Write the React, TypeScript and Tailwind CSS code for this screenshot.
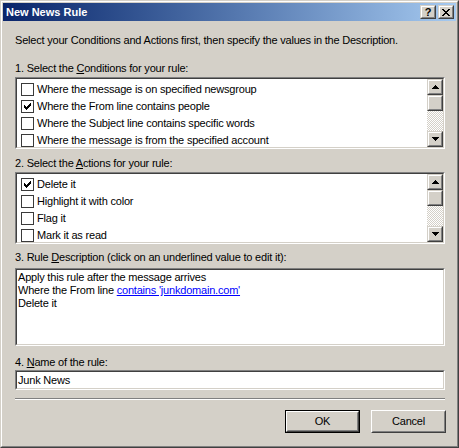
import type { ReactNode } from "react";

type BoxProps = { className?: string; innerClassName?: string; children?: ReactNode };

function Sunken({ className = "", innerClassName = "", children }: BoxProps) {
  return (
    <div className={`border border-t-[#808080] border-l-[#808080] border-r-white border-b-white ${className}`}>
      <div
        className={`h-full border border-t-[#404040] border-l-[#404040] border-r-[#d4d0c8] border-b-[#d4d0c8] bg-white ${innerClassName}`}
      >
        {children}
      </div>
    </div>
  );
}

function Raised({ className = "", children }: BoxProps) {
  return (
    <div className={`border border-t-[#d4d0c8] border-l-[#d4d0c8] border-r-[#404040] border-b-[#404040] ${className}`}>
      <div className="flex h-full items-center justify-center border border-t-white border-l-white border-r-[#808080] border-b-[#808080] bg-[#d4d0c8]">
        {children}
      </div>
    </div>
  );
}

function PushButton({ label, isDefault = false }: { label: string; isDefault?: boolean }) {
  const body = (
    <div className="h-full border border-t-white border-l-white border-r-[#404040] border-b-[#404040]">
      <div className="flex h-full items-center justify-center border border-t-[#d4d0c8] border-l-[#d4d0c8] border-r-[#808080] border-b-[#808080] bg-[#d4d0c8] text-[11px] text-black">
        {label}
      </div>
    </div>
  );
  if (isDefault) {
    return <div className="h-[23px] w-[75px] border border-black">{body}</div>;
  }
  return <div className="h-[23px] w-[75px]">{body}</div>;
}

function Arrow({ down = false }: { down?: boolean }) {
  return (
    <svg width="7" height="4" viewBox="0 0 7 4" shapeRendering="crispEdges" className={down ? "rotate-180" : ""}>
      <path d="M3 0h1v1h-1z M2 1h3v1h-3z M1 2h5v1h-5z M0 3h7v1h-7z" fill="#000" />
    </svg>
  );
}

function Scrollbar() {
  return (
    <div className="flex h-full w-[16px] shrink-0 flex-col">
      <Raised className="h-[16px]">
        <Arrow />
      </Raised>
      <Raised className="h-[16px]" />
      <div className="flex-1 bg-[image:repeating-conic-gradient(#d4d0c8_0_25%,#ffffff_0_50%)] bg-[length:2px_2px]" />
      <Raised className="h-[16px]">
        <Arrow down />
      </Raised>
    </div>
  );
}

function CheckRow({ label, checked = false }: { label: string; checked?: boolean }) {
  return (
    <div className="flex h-[17px] shrink-0 items-center pl-[4px]">
      <div className="flex h-[13px] w-[13px] shrink-0 items-center justify-center border border-[#3a3a3a] bg-white">
        {checked && (
          <svg width="11" height="11" viewBox="0 0 11 11" shapeRendering="crispEdges">
            <path d="M8 2h1v3h-1z M7 3h1v3h-1z M6 4h1v3h-1z M5 5h1v3h-1z M4 6h1v3h-1z M3 5h1v3h-1z M2 4h1v3h-1z" fill="#000" />
          </svg>
        )}
      </div>
      <span className="ml-[3px] whitespace-nowrap">{label}</span>
    </div>
  );
}

function RuleList({ items }: { items: { label: string; checked?: boolean }[] }) {
  return (
    <Sunken className="h-[72px] w-[430px]" innerClassName="flex">
      <div className="flex flex-1 flex-col overflow-hidden pt-[2px]">
        {items.map((item) => (
          <CheckRow key={item.label} label={item.label} checked={item.checked} />
        ))}
      </div>
      <Scrollbar />
    </Sunken>
  );
}

const conditions = [
  { label: "Where the message is on specified newsgroup" },
  { label: "Where the From line contains people", checked: true },
  { label: "Where the Subject line contains specific words" },
  { label: "Where the message is from the specified account" },
];

const actions = [
  { label: "Delete it", checked: true },
  { label: "Highlight it with color" },
  { label: "Flag it" },
  { label: "Mark it as read" },
];

export default function App() {
  return (
    <div className="h-[448px] w-[459px] border border-t-[#d4d0c8] border-l-[#d4d0c8] border-r-[#404040] border-b-[#404040] font-['Liberation_Sans',Arial,sans-serif] text-[11px] leading-[13px] tracking-[-0.2px] text-black">
      <div className="h-full border border-t-white border-l-white border-r-[#808080] border-b-[#808080] bg-[#d4d0c8] p-[1px]">
        {/* title bar */}
        <div className="flex h-[18px] items-center bg-linear-to-r from-[#0a246a] to-[#a6caf0] pl-[3px] pr-[2px]">
          <span className="flex-1 text-[11px] font-bold tracking-normal text-white">New News Rule</span>
          <Raised className="h-[14px] w-[16px]">
            <span className="text-[11px] font-bold leading-none tracking-normal">?</span>
          </Raised>
          <Raised className="ml-[2px] h-[14px] w-[16px]">
            <svg width="8" height="7" viewBox="0 0 8 7" shapeRendering="crispEdges">
              <path
                d="M0 0h2v1h-2z M6 0h2v1h-2z M1 1h2v1h-2z M5 1h2v1h-2z M2 2h4v1h-4z M3 3h2v1h-2z M2 4h4v1h-4z M1 5h2v1h-2z M5 5h2v1h-2z M0 6h2v1h-2z M6 6h2v1h-2z"
                fill="#000"
              />
            </svg>
          </Raised>
        </div>

        <div className="flex flex-col pl-[12px]">
          <p className="mt-[13px]">Select your Conditions and Actions first, then specify the values in the Description.</p>

          <p className="mt-[15px]">
            1. Select the <u>C</u>onditions for your rule:
          </p>
          <div className="mt-[2px]">
            <RuleList items={conditions} />
          </div>

          <p className="mt-[8px]">
            2. Select the <u>A</u>ctions for your rule:
          </p>
          <div className="mt-[2px]">
            <RuleList items={actions} />
          </div>

          <p className="mt-[7px]">
            3. Rule <u>D</u>escription (click on an underlined value to edit it):
          </p>
          <Sunken className="mt-[4px] h-[78px] w-[430px]" innerClassName="px-[1px] pt-[1px]">
            <p>Apply this rule after the message arrives</p>
            <p>
              Where the From line <span className="text-[#0000ff] underline">contains 'junkdomain.com'</span>
            </p>
            <p>Delete it</p>
          </Sunken>

          <p className="mt-[10px]">
            4. <u>N</u>ame of the rule:
          </p>
          <Sunken className="mt-[1px] h-[20px] w-[430px]" innerClassName="flex items-center px-[1px]">
            <span>Junk News</span>
          </Sunken>

          <div className="mt-[8px] w-[430px] border-t border-b border-t-[#808080] border-b-white" />

          <div className="mt-[10px] flex w-[431px] justify-end gap-[11px]">
            <PushButton label="OK" isDefault />
            <PushButton label="Cancel" />
          </div>
        </div>
      </div>
    </div>
  );
}
